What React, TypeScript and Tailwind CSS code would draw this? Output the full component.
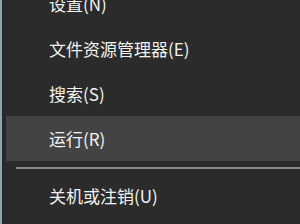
const items = ['设置(N)', '文件资源管理器(E)', '搜索(S)', '运行(R)']

export default function App() {
  return (
    <div className="flex h-[224px] w-[300px] overflow-hidden bg-[#2b2b2b] text-[17px] text-[#f2f2f2] [font-family:'Noto_Sans_CJK_SC',sans-serif]">
      <div className="w-[2px] shrink-0 bg-[#8fa6ae]" />
      <div className="w-[4px] shrink-0 bg-[#28292b]" />
      <div className="flex flex-1 flex-col">
        <div className="-mt-[19px] flex flex-col">
          {items.map((label) => (
            <div
              key={label}
              className={
                'flex h-[45px] items-center pl-[43px] ' +
                (label === '运行(R)' ? 'bg-[#434343]' : '')
              }
            >
              {label}
            </div>
          ))}
        </div>
        <div className="ml-[10px] mt-[6px] h-[2px] bg-[#888888]" />
        <div className="mt-[4px] flex h-[45px] items-center pl-[43px]">关机或注销(U)</div>
      </div>
    </div>
  )
}
